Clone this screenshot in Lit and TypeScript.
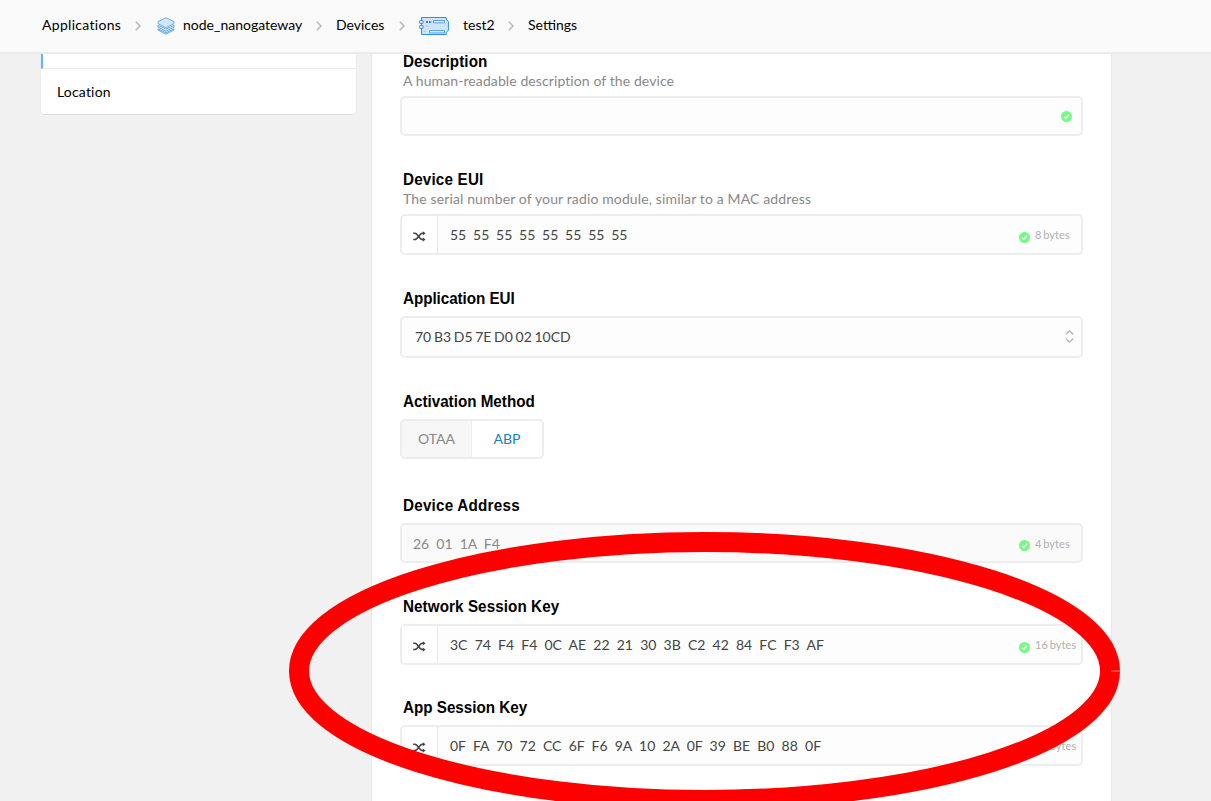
import { LitElement, html, css, svg, nothing } from "lit";
import { customElement } from "lit/decorators.js";
import { classMap } from "lit/directives/class-map.js";

interface Field {
  label: string;
  hint?: string;
  kind: "text" | "hex" | "select" | "toggle" | "fixed";
  value?: string;
  bytes?: string;
  name: string;
}

const fields: Field[] = [
  { name: "description", label: "Description", hint: "A human-readable description of the device", kind: "text" },
  { name: "dev-eui", label: "Device EUI", hint: "The serial number of your radio module, similar to a MAC address", kind: "hex", value: "55 55 55 55 55 55 55 55", bytes: "8 bytes" },
  { name: "app-eui", label: "Application EUI", kind: "select", value: "70 B3 D5 7E D0 02 10CD" },
  { name: "activation", label: "Activation Method", kind: "toggle" },
  { name: "address", label: "Device Address", kind: "fixed", value: "26 01 1A F4", bytes: "4 bytes" },
  { name: "nwk-key", label: "Network Session Key", kind: "hex", value: "3C 74 F4 F4 0C AE 22 21 30 3B C2 42 84 FC F3 AF", bytes: "16 bytes" },
  { name: "app-key", label: "App Session Key", kind: "hex", value: "0F FA 70 72 CC 6F F6 9A 10 2A 0F 39 BE B0 88 0F", bytes: "16 bytes" },
];

const chevron = html`<svg class="chev" width="6" height="10" viewBox="0 0 6 10">
  <path d="M0.8 0.8 5 5 0.8 9.2" fill="none" stroke="#b8b8b8" stroke-width="1.5" />
</svg>`;

const layers = html`<svg class="layers" width="18" height="18" viewBox="0 0 18 18">
  <g fill="#d3e6f7" stroke="#6cabdf" stroke-width="1" stroke-linejoin="round">
    <path d="M1 11.8v1.2L9 17.200l8-4.200v-1.200l-8 4z" />
    <path d="M1 8.200v2L9 14.400l8-4.200v-2l-8 4z" />
    <path d="M1 4.700v1.900l8 4.200 8-4.200V4.700L9 .7z" />
  </g>
</svg>`;

const board = html`<svg class="board" width="30" height="18" viewBox="0 0 30 18">
  <path d="M2.5.5h24.7v1.8l2.2 2.2v8.8l-2.2 2.2v2H2.5z" fill="#cfe3f7" stroke="#2e8ee2" />
  <g fill="#cfe3f7" stroke="#2e8ee2" stroke-width="1">
    <rect x=".5" y="3.5" width="3.6" height="3" rx=".8" />
    <rect x=".5" y="8.5" width="3.6" height="3" rx=".8" />
    <path d="M14.5 3.5h11v2.4h-11zM10.500 13.500h15v2.400h-15z" stroke="#5aa6e8" fill="#deecf9" />
  </g>
  <path d="M7 4h2v2H7zM10 4h2v2h-2z" fill="#2e8ee2" />
  <path d="M7 9h2.500M4.500 14.500h2" stroke="#9cc8ef" />
</svg>`;

const check = html`<svg class="check" width="11" height="11" viewBox="0 0 11 11">
  <circle cx="5.500" cy="5.500" r="5.500" fill="#73fb84" />
  <path d="M3 5.800 4.800 7.500 8 3.600" fill="none" stroke="#fff" stroke-width="1.500" />
</svg>`;

const shuffle = html`<svg width="13" height="11" viewBox="0 0 13 11">
  <g fill="none" stroke="#444" stroke-width="1.500">
    <path d="M.2 2.300h1.800c2.600 0 4.600 6.300 7.200 6.300h1" />
    <path d="M.2 8.600h1.800c2.600 0 4.600-6.300 7.200-6.300h1" />
  </g>
  <path d="M9.800 .2 12.500 2.300 9.800 4.400zM9.800 6.500l2.700 2.100L9.800 10.700z" fill="#444" />
</svg>`;

const sorter = html`<svg class="sorter" width="9" height="13" viewBox="0 0 9 13">
  <path d="M.8 4.400 4.500.9l3.700 3.500M.8 8.600l3.700 3.500 3.700-3.500" fill="none" stroke="#aaa" stroke-width="1.200" />
</svg>`;

@customElement("settings-field")
class SettingsField extends LitElement {
  static properties = { field: { attribute: false } };
  declare field: Field;

  static styles = css`
    :host { display: block; }
    .label {
      width: max-content; margin-left: 3px; height: 16px; white-space: nowrap;
      font: bold 16px/16px "Liberation Sans", Arial, sans-serif; color: #000;
      transform-origin: 0 0; transform: scaleX(0.95); letter-spacing: var(--label-tracking, 0);
    }
    .hint { margin: 3px 0 0 3px; height: 16px; font-size: 14px; line-height: 16px; color: #888; white-space: nowrap; letter-spacing: var(--hint-tracking, 0); }
    .box {
      box-sizing: border-box; display: flex; align-items: center; height: 41px; margin-top: 9px;
      border: 2px solid #ededed; border-radius: 5px; background: #fdfdfd; color: #444; overflow: hidden;
    }
    .hint + .box { margin-top: 7px; }
    .text, .fixed { height: 40px; }
    .select { height: 42px; }
    .fixed { background: #fafafa; color: #888; padding-top: 2px; }
    .toggle { height: 40px; width: 144px; }
    .random {
      box-sizing: border-box; align-self: stretch; width: 36px; display: grid; place-items: center;
      border-right: 1px solid #e8e8e8; background: #fff; padding: 3px 0 0 0;
    }
    .value { flex: 1; padding-left: 12px; font-size: 14px; line-height: 18px; white-space: pre; word-spacing: var(--pair-gap, 3.58px); }
    .fixed .value { padding-left: 11px; }
    .select .value { padding-left: 13px; word-spacing: -0.9px; }
    .check { display: block; flex: none; }
    .text { justify-content: flex-end; padding: 1px 9px 0 0; }
    .hex .check { margin: 5px 5px 0 0; }
    .fixed .check { margin: 2px 5px 0 0; }
    .bytes { width: 46px; font-size: 11px; line-height: 14px; color: #b0b0b0; white-space: nowrap; word-spacing: -1.2px; letter-spacing: 0.1px; }
    .sorter { margin: 0 7px 1px 0; }
    .option { flex: 1; align-self: stretch; display: grid; place-items: center; padding: 0 0 2px 0; font-size: 14px; color: #888; background: #f7f7f7; }
    .option:first-child { flex: 0 0 69px; }
    .option.on { background: #fff; color: #0f82d4; border-left: 1px solid #ededed; }
  `;

  render() {
    const f = this.field;
    return html`
      <div class="label">${f.label}</div>
      ${f.hint ? html`<div class="hint">${f.hint}</div>` : nothing}
      <div class=${classMap({ box: true, [f.kind]: true })}>
        ${f.kind === "toggle"
          ? html`<div class="option">OTAA</div><div class="option on">ABP</div>`
          : nothing}
        ${f.kind === "hex" ? html`<div class="random">${shuffle}</div>` : nothing}
        ${f.value ? html`<div class="value">${f.value}</div>` : nothing}
        ${f.kind === "text" || f.bytes ? check : nothing}
        ${f.bytes ? html`<div class="bytes">${f.bytes}</div>` : nothing}
        ${f.kind === "select" ? sorter : nothing}
      </div>
    `;
  }
}

@customElement("app-root")
class AppRoot extends LitElement {
  static styles = css`
    :host {
      display: flex; flex-direction: column; position: relative; height: 801px; overflow: hidden;
      background: #f1f1f1; font-family: Lato, sans-serif; color: #000;
    }
    .crumbs {
      flex: none; box-sizing: border-box; height: 54px; padding: 0 0 2px 42px; border-bottom: 2px solid #ebebeb;
      background: #fafafa; display: grid; align-items: center; font-size: 14px; line-height: 18px; white-space: nowrap;
      grid-template-columns: 93px 22px 26px 133px 20px 63px 20px 44px 45px 20px 60px;
    }
    .wide { letter-spacing: 0.3px; }
    .crumbs svg { margin-top: 2px; }
    .main { flex: 1; min-height: 0; display: flex; align-items: flex-start; padding-left: 40px; overflow: hidden; }
    .menu {
      box-sizing: border-box; width: 317px; margin-right: 14px; background: #fff; border: 1px solid #ececec;
      border-top: 0; border-bottom-color: #dcdcdc; border-radius: 0 0 5px 5px; font-size: 14px;
    }
    .active { height: 14px; border-left: 2px solid #64b5f6; border-bottom: 1px solid #ebebeb; }
    .item { height: 45px; line-height: 46px; padding-left: 16px; letter-spacing: 0.18px; }
    .card {
      box-sizing: border-box; width: 741px; height: 747px; padding: 0 28px; background: #fff;
      border: solid #e8e8e8; border-width: 0 1px; overflow: hidden;
    }
    settings-field { margin-bottom: 36px; }
    .description { --label-tracking: 0.07px; --hint-tracking: 0.095px; }
    .dev-eui { --label-tracking: 0.2px; --hint-tracking: 0.133px; --pair-gap: 3.2px; }
    .app-eui { --label-tracking: -0.05px; }
    .activation { margin-bottom: 39px; }
    .address { --label-tracking: 0.25px; --pair-gap: 3.5px; }
    .nwk-key { margin-bottom: 35px; --label-tracking: 0.09px; }
    .marker { position: absolute; left: 0; top: 0; }
  `;

  render() {
    return html`
      <nav class="crumbs">
        <span class="wide">Applications</span>${chevron}${layers}<span>node_nanogateway</span>${chevron}
        <span>Devices</span>${chevron}${board}<span>test2</span>${chevron}<span>Settings</span>
      </nav>
      <div class="main">
        <aside class="menu"><div class="active"></div><div class="item">Location</div></aside>
        <section class="card">
          ${fields.map((f) => html`<settings-field class=${f.name} .field=${f}></settings-field>`)}
        </section>
      </div>
      <svg class="marker" width="1211" height="801" viewBox="0 0 1211 801">
        ${svg`<ellipse cx="704.5" cy="671" rx="405.5" ry="129" fill="none" stroke="#f00" stroke-width="20" />`}
        <path d="M1111 671h9" stroke="#ff8080" stroke-width="1" />
      </svg>
    `;
  }
}
